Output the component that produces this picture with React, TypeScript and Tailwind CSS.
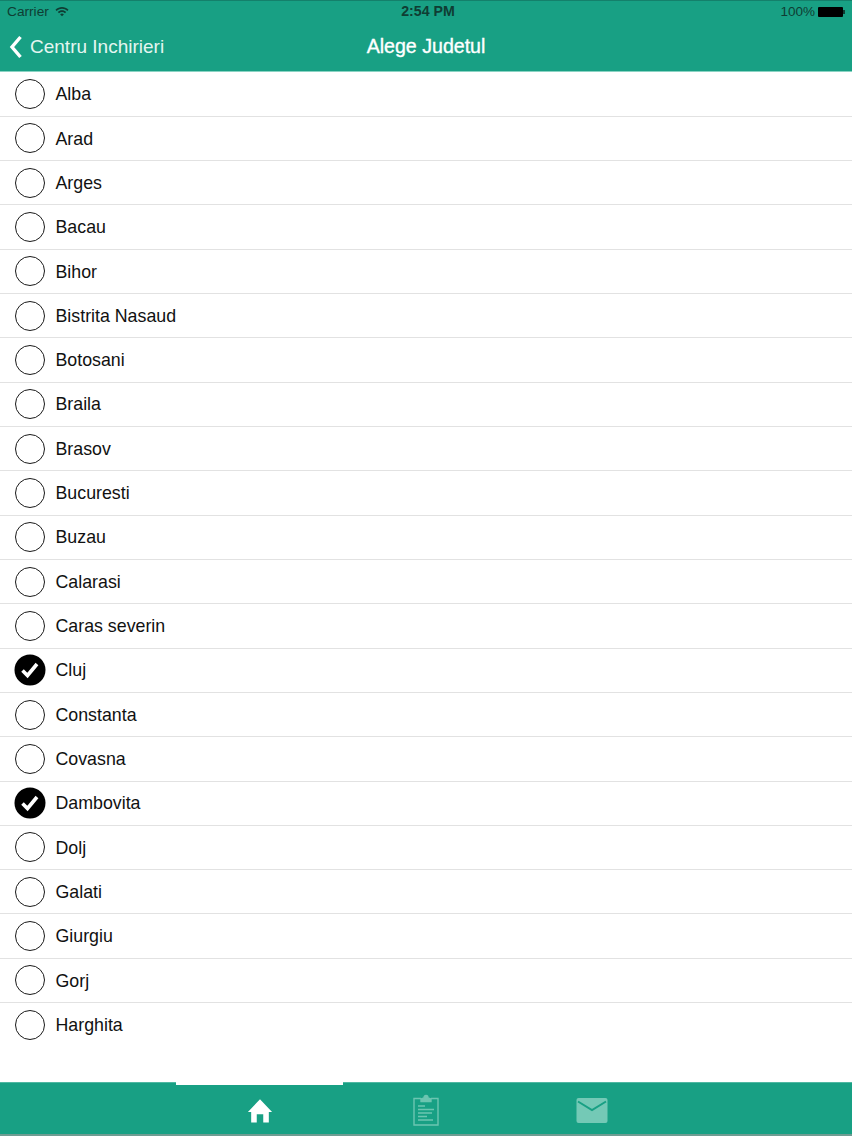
import React from 'react';

const counties = [
  'Alba', 'Arad', 'Arges', 'Bacau', 'Bihor', 'Bistrita Nasaud', 'Botosani', 'Braila', 'Brasov', 'Bucuresti', 'Buzau',
  'Calarasi', 'Caras severin', 'Cluj', 'Constanta', 'Covasna', 'Dambovita', 'Dolj', 'Galati', 'Giurgiu', 'Gorj', 'Harghita',
];
const selected = ['Cluj', 'Dambovita'];

function Radio({ checked }: { checked: boolean }) {
  if (checked) {
    return (
      <svg width="32" height="32" viewBox="0 0 32 32" className="shrink-0">
        <circle cx="16" cy="16" r="15.5" fill="#000" />
        <path d="M8.5 16.5 L13.5 21.5 L23 10" fill="none" stroke="#fff" strokeWidth="3.6" strokeLinejoin="miter" />
      </svg>
    );
  }
  return <div className="w-[30px] h-[30px] mx-px shrink-0 rounded-full border-[1.5px] border-[#1a1a1a] bg-white" />;
}

function Row({ name }: { name: string }) {
  return (
    <div className="h-[44.32px] shrink-0 flex items-center pl-[14px] gap-[9.5px] border-b border-[#e2e2e2] last:border-b-0">
      <Radio checked={selected.includes(name)} />
      <span className="text-[17.8px] text-[#111] leading-none mt-[2px]">{name}</span>
    </div>
  );
}

export default function App() {
  return (
    <div className="w-[852px] h-[1136px] flex flex-col bg-white font-['Liberation_Sans',Arial,sans-serif] overflow-hidden">
      {/* Status bar + nav */}
      <header className="h-[72px] shrink-0 bg-[#18a084] border-t border-[#14806b] border-b border-b-[#8ad3c3] flex flex-col">
        <div className="h-[22px] shrink-0 grid grid-cols-3 items-center px-[7px] text-[13.7px] text-[#0f3d33]">
          <div className="flex items-center gap-[6px]">
            <span>Carrier</span>
            <svg width="14" height="11" viewBox="0 0 15 11" className="-mt-px">
              <path d="M0.5 3.6 C4.5 -0.4 10.5 -0.4 14.5 3.6 L13.2 4.9 C9.8 1.7 5.2 1.7 1.8 4.9 Z" fill="#0f3d33" />
              <path d="M3 6.1 C5.6 3.6 9.4 3.6 12 6.1 L10.7 7.4 C8.8 5.7 6.2 5.7 4.3 7.4 Z" fill="#0f3d33" />
              <path d="M5.5 8.6 C6.7 7.5 8.3 7.5 9.5 8.6 L7.5 10.6 Z" fill="#0f3d33" />
            </svg>
          </div>
          <div className="text-center font-bold text-[14.2px] pl-[4px]">2:54 PM</div>
          <div className="flex items-center justify-end gap-[3px]">
            <span className="text-[13.5px]">100%</span>
            <div className="flex items-center">
              <div className="w-[25px] h-[10px] bg-black rounded-[1px]" />
              <div className="w-[2px] h-[4px] bg-[#0f3d33]" />
            </div>
          </div>
        </div>
        <div className="flex-1 relative flex items-center justify-center text-white text-[19px]">
          <div className="absolute left-[9px] top-0 bottom-0 flex items-center gap-[7px] text-[#e4f6f1]">
            <svg width="14" height="24" viewBox="0 0 14 24">
              <path d="M11.5 2 L3 12 L11.5 22" fill="none" stroke="#fff" strokeWidth="3.4" />
            </svg>
            <span>Centru Inchirieri</span>
          </div>
          <span className="text-[19.6px] [-webkit-text-stroke:0.35px_white]">Alege Judetul</span>
        </div>
      </header>

      {/* List */}
      <main className="flex-1 min-h-0 flex flex-col pt-[0.5px]">
        {counties.map((c) => (
          <Row key={c} name={c} />
        ))}
      </main>

      {/* Tab bar */}
      <footer className="h-[54px] shrink-0 bg-[#18a084] border-t border-[#4fb8a2] border-b-2 border-b-[#6f9c92] grid grid-cols-[176px_167px_166px_166px_177px] relative">
        <div />
        <div className="relative flex items-center justify-center">
          <div className="absolute left-0 right-0 -top-px h-[3px] bg-white" />
          <svg width="26" height="27" viewBox="0 0 28 28" className="mt-[3px]">
            <path d="M14 2 L27 15.5 L23.5 15.5 L23.5 27 L17.5 27 L17.5 18 L10.5 18 L10.5 27 L4.5 27 L4.5 15.5 L1 15.5 Z" fill="#fff" />
          </svg>
        </div>
        <div className="flex items-center justify-center">
          <svg width="26" height="32" viewBox="0 0 26 32" className="mt-[2px]" fill="none" stroke="#6cc5b1" strokeWidth="1.4">
            <path d="M8 4.5 L1 4.5 L1 31 L25 31 L25 4.5 L18 4.5" />
            <path d="M8 7.5 L8 5 L11 4 C11 0.5 15 0.5 15 4 L18 5 L18 7.5 Z" fill="#6cc5b1" />
            <path d="M5 12 H12 M5 15.5 H21 M5 19 H19 M5 22.5 H14 M5 26 H20" strokeWidth="1.3" />
          </svg>
        </div>
        <div className="flex items-center justify-center">
          <svg width="32" height="25" viewBox="0 0 32 25" className="mt-[3px]">
            <rect x="0.5" y="0" width="31" height="25" rx="2" fill="#74c9b6" />
            <path d="M2 3.5 L16 12 L30 3.5" fill="none" stroke="#18a084" strokeWidth="2" />
          </svg>
        </div>
        <div />
      </footer>
    </div>
  );
}
